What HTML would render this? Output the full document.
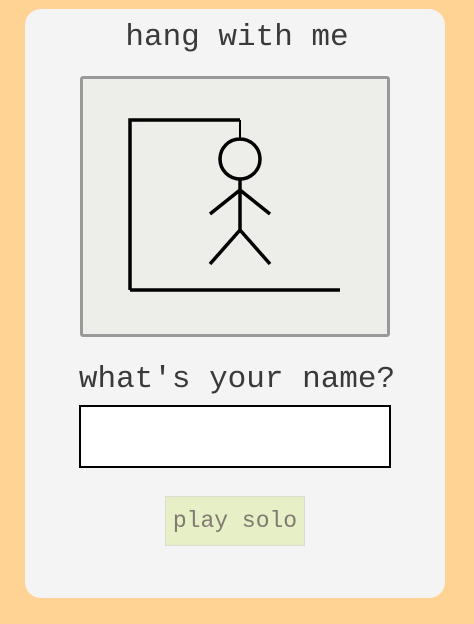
<!DOCTYPE html>
<html><head><style>
html,body{margin:0;padding:0;}
body{width:474px;height:624px;background:#ffd394;position:relative;overflow:hidden;font-family:"Liberation Mono",monospace;}
.card{position:absolute;left:25px;top:9px;width:420px;height:589px;background:#f4f4f4;border-radius:16px;}
.t{position:absolute;left:0;width:474px;text-align:center;color:#3a3a3a;font-size:31px;line-height:1;}
.cv{position:absolute;left:80px;top:76px;width:304px;height:255px;background:#ededea;border:3px solid #999;border-radius:3px;}
.in{position:absolute;left:79px;top:405px;width:308px;height:59px;background:#fff;border:2px solid #000;}
.btn{position:absolute;left:165px;top:496px;width:138px;height:48px;background:#e6efc5;border:1px solid #dcdcd0;color:#807a70;font-size:23px;line-height:48px;text-align:center;}
</style></head><body>
<div class="card"></div>
<div class="t" style="top:22px">hang with me</div>
<div class="cv"></div>
<svg style="position:absolute;left:0;top:0" width="474" height="624">
<g stroke="#000" fill="none" stroke-width="3.5">
<path d="M130 290V120H240" />
<path d="M130 290H340"/>
<path d="M240 120V140" stroke-width="2"/>
<circle cx="240" cy="159" r="20"/>
<path d="M240 179V230M240 190L210 214M240 190L270 214M240 230L210 264M240 230L270 264"/>
</g></svg>
<div class="t" style="top:364px">what's your name?</div>
<div class="in"></div>
<div class="btn">play solo</div>
</body></html>
